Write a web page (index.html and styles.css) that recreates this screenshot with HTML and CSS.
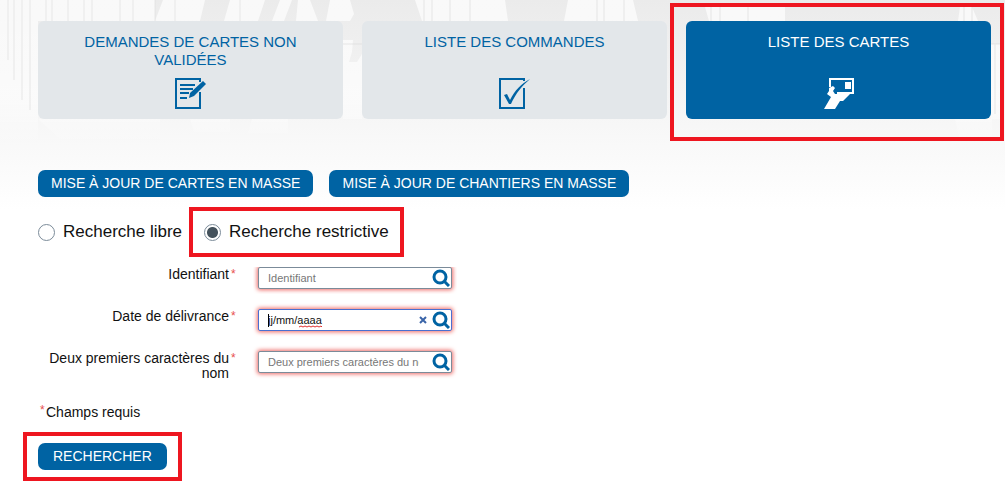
FILE: index.html
```html
<!DOCTYPE html>
<html lang="fr">
  <head>
    <meta charset="UTF-8" />
    <meta name="viewport" content="width=device-width, initial-scale=1.0" />
    <title>Liste des cartes</title>
    <link rel="stylesheet" href="styles.css">
  </head>
  <body>
    <!-- Building site skyline behind the tabs -->
    <svg class="backdrop" viewBox="0 0 1005 210" preserveAspectRatio="none" aria-hidden="true">
      <defs>
        <linearGradient id="sky" x1="0" y1="0" x2="0" y2="1">
          <stop offset="0" stop-color="#ebebeb" />
          <stop offset="0.6" stop-color="#f7f7f7" />
          <stop offset="0.8" stop-color="#fbfbfb" />
          <stop offset="1" stop-color="#fff" />
        </linearGradient>
        <linearGradient id="haze" gradientUnits="userSpaceOnUse" x1="0" y1="0" x2="0" y2="145">
          <stop offset="0" stop-color="#fff" stop-opacity="0.7" />
          <stop offset="0.7" stop-color="#fff" stop-opacity="0.6" />
          <stop offset="1" stop-color="#fff" stop-opacity="0" />
        </linearGradient>
      </defs>
      <rect width="1005" height="210" fill="url(#sky)" />
      <g fill="url(#haze)">
        <path d="M0 0h155v21H38v124H0z" />
        <path d="M205 0h-42l-8 21h45zM265 0h-35l-6 21h34zM280 0l-8 21h12l8-21zM298 0h12l8 21h-22z" />
        <path d="M330 0h20l4 14-4 7h-24zM343 40h10l-1 12-3 10 8 0 5-8v65h-19z" />
        <path d="M415 0h90l3 21h-86zM568 0h65l5 21h-74zM705 7h80v14h-76zM960 7h12l6 14h-20zM991 44h9v75h-9z" />
        <path d="M38 119h122v20H60zM190 119h40v13h-36zM252 119h36v14h-40zM955 119h37v22h-32z" />
      </g>
      <g stroke="#dadada" fill="none" opacity="0.6">
        <path d="M8 0v60M14 0v80M22 0v100M30 0v110M46 0v21M52 0v21M68 0v21M84 0v21M92 0v21M120 0v21M133 0v21M155 0v21M175 0v21M240 0v21M424 0v21M432 0v21M450 0v21M470 0v21M597 0v21M604 0v21M624 0v21M711 7v14M720 7v14M748 7v14M964 7v14M972 7v14M995 44v70" />
        <path d="M343 44h19M991 44h9" />
      </g>
    </svg>

    <main class="page">
      <nav class="tabs">
        <a class="tab" href="#demandes">
          <span>Demandes de cartes non validées</span>
          <svg class="tab-icon" width="32" height="32" viewBox="0 0 32 32" aria-hidden="true">
            <path d="M25 4V1H1v29h24V14" fill="none" stroke="currentColor" stroke-width="2" />
            <path d="M5 7h15M5 11h13M5 15h9M5 20h7" stroke="currentColor" stroke-width="2" />
            <path d="M28 3l3 3-12 12-5 2 1-5z" fill="currentColor" />
          </svg>
        </a>
        <a class="tab" href="#commandes">
          <span>Liste des commandes</span>
          <svg class="tab-icon" width="32" height="32" viewBox="0 0 32 32" aria-hidden="true">
            <path d="M25 3V1H1v29h24V10" fill="none" stroke="currentColor" stroke-width="2" />
            <path d="M5 17l3-1 3 6C16 12 22 6 31 1 23 8 17 15 12 26h-2z" fill="currentColor" />
          </svg>
        </a>
        <a class="tab active highlight" href="#cartes" aria-current="page">
          <span>Liste des cartes</span>
          <svg class="tab-icon" width="32" height="32" viewBox="0 0 32 32" aria-hidden="true">
            <path d="M7 9V1h23v14H14" fill="none" stroke="currentColor" stroke-width="2" />
            <path d="M22 4h6v7h-6z" fill="currentColor" />
            <path d="M6 10l4-2 2 2-2 3 2 3h15l-7 7h-3l-5 8H1l7-12-4-3 2-3z" fill="currentColor" />
          </svg>
        </a>
      </nav>

      <div class="actions">
        <button type="button" class="button">Mise à jour de cartes en masse</button>
        <button type="button" class="button">Mise à jour de chantiers en masse</button>
      </div>

      <form class="search">
        <div class="modes">
          <label class="mode"><input type="radio" name="mode" value="libre"> Recherche libre</label>
          <label class="mode highlight"><input type="radio" name="mode" value="restrictive" checked> Recherche restrictive</label>
        </div>

        <div class="fields">
          <div class="field">
            <label for="identifiant">Identifiant</label>
            <span class="required">*</span>
            <div class="input-box clipped">
              <input type="text" id="identifiant" placeholder="Identifiant">
              <svg class="loupe" width="18" height="18" viewBox="0 0 18 18" aria-hidden="true">
                <circle cx="8" cy="8" r="6" /><path d="M12 12l5 5" />
              </svg>
            </div>
          </div>
          <div class="field">
            <label for="delivrance">Date de délivrance</label>
            <span class="required">*</span>
            <div class="input-box focused">
              <span class="caret"></span>
              <input type="text" id="delivrance" class="date" value="jj/mm/aaaa">
              <svg class="wave" width="25" height="3" viewBox="0 0 25 3" aria-hidden="true">
                <path d="M0 2l2-1 2 1 2-1 2 1 2-1 2 1 2-1 2 1 2-1 2 1 2-1 1 1" />
              </svg>
              <button type="button" class="clear" aria-label="Effacer">
                <svg width="8" height="8" viewBox="0 0 8 8" aria-hidden="true"><path d="M1 1l6 6M7 1L1 7" /></svg>
              </button>
              <svg class="loupe" width="18" height="18" viewBox="0 0 18 18" aria-hidden="true">
                <circle cx="8" cy="8" r="6" /><path d="M12 12l5 5" />
              </svg>
            </div>
          </div>
          <div class="field">
            <label for="nom">Deux premiers caractères du nom</label>
            <span class="required">*</span>
            <div class="input-box">
              <input type="text" id="nom" placeholder="Deux premiers caractères du nom">
              <svg class="loupe" width="18" height="18" viewBox="0 0 18 18" aria-hidden="true">
                <circle cx="8" cy="8" r="6" /><path d="M12 12l5 5" />
              </svg>
            </div>
          </div>
        </div>

        <p class="note"><span class="required">*</span>Champs requis</p>
        <button type="submit" class="button submit highlight">Rechercher</button>
      </form>
    </main>
  </body>
</html>
```
FILE: styles.css
```css
* {
  margin: 0;
  padding: 0;
  box-sizing: border-box;
}

body {
  background: #fff;
  color: #111;
  font-family: Arial, "Liberation Sans", sans-serif;
  font-size: 14px;
  position: relative;
  overflow-x: hidden;
}

.backdrop {
  position: absolute;
  top: 0;
  left: 0;
  width: 100%;
  height: 210px;
  z-index: -1;
}

.page {
  padding: 21px 14px 21px 38px;
}

.tabs {
  display: grid;
  grid-template-columns: repeat(3, 1fr);
  gap: 19px;
  margin-bottom: 51px;
}

.tab {
  display: flex;
  flex-direction: column;
  align-items: center;
  justify-content: space-between;
  height: 98px;
  padding: 12px 40px 9px;
  border-radius: 6px;
  background: #e3e7ea;
  color: #0063a3;
  font-size: 15px;
  line-height: 18px;
  text-align: center;
  text-decoration: none;
  text-transform: uppercase;
}

.tab.active {
  background: #0063a3;
  color: #fff;
}

/* Red frame around the items to look at */
.highlight {
  position: relative;
}

.highlight::after {
  content: "";
  position: absolute;
  inset: -11px -15px;
  border: 4px solid #ee1620;
  pointer-events: none;
}

.tab.highlight::after {
  inset: -18px -13px -22px -16px;
}

.mode.highlight::after {
  inset: -14px -15px;
}

.actions {
  display: flex;
  gap: 16px;
  margin-bottom: 24px;
}

.button {
  height: 27px;
  padding: 0 13px 2px;
  border: none;
  border-radius: 7px;
  background: #0063a3;
  color: #fff;
  font-family: inherit;
  font-size: 14px;
  text-transform: uppercase;
  cursor: pointer;
}

.button.submit {
  padding: 0 15px 2px;
}

.modes {
  display: flex;
  gap: 22px;
  margin-bottom: 24px;
}

.mode {
  display: flex;
  align-items: center;
  gap: 8px;
  font-size: 17px;
  line-height: 22px;
}

.mode input {
  appearance: none;
  width: 17px;
  height: 17px;
  border: 1px solid #7b8b99;
  border-radius: 50%;
  background: #fff;
}

.mode input:checked {
  background: radial-gradient(circle, #44525c 5px, #fff 6px);
}

.fields {
  display: grid;
  gap: 12px;
}

.field {
  display: flex;
  height: 30px;
}

.field label {
  width: 191px;
  padding-left: 10px;
  line-height: 15px;
  text-align: right;
}

.required {
  width: 6px;
  margin-left: 2px;
  color: #e8504f;
  font-size: 12px;
  line-height: 15px;
}

.input-box {
  display: flex;
  align-items: center;
  position: relative;
  width: 194px;
  height: 22px;
  margin-left: 21px;
  padding: 0 1px 0 9px;
  border: 1px solid #7b8b99;
  border-radius: 2px;
  background: #fff;
  box-shadow: 0 0 4px 1px #ef6a66;
}

.input-box.clipped {
  clip-path: inset(0 -5px -5px -5px);
}

.input-box.focused {
  border-color: #4a6fd0;
}

.input-box input {
  flex: 1;
  min-width: 0;
  margin-right: 13px;
  border: none;
  outline: none;
  background: none;
  color: #111;
  font-family: inherit;
  font-size: 11px;
}

.input-box .date {
  margin-right: 0;
}

.input-box input::placeholder {
  color: #777;
}

.caret {
  position: absolute;
  left: 9px;
  top: 4px;
  width: 1px;
  height: 13px;
  background: #000;
}

.wave {
  position: absolute;
  left: 40px;
  top: 15px;
  fill: none;
  stroke: #e03030;
}

.clear {
  width: 8px;
  height: 8px;
  margin-right: 5px;
  border: none;
  background: none;
  cursor: pointer;
}

.clear svg {
  display: block;
  stroke: #3a64a8;
  stroke-width: 2;
}

.loupe {
  flex: none;
  fill: none;
  stroke: #0063a3;
  stroke-width: 3;
}

.note {
  display: flex;
  margin: 22px 0;
  line-height: 18px;
}
```
